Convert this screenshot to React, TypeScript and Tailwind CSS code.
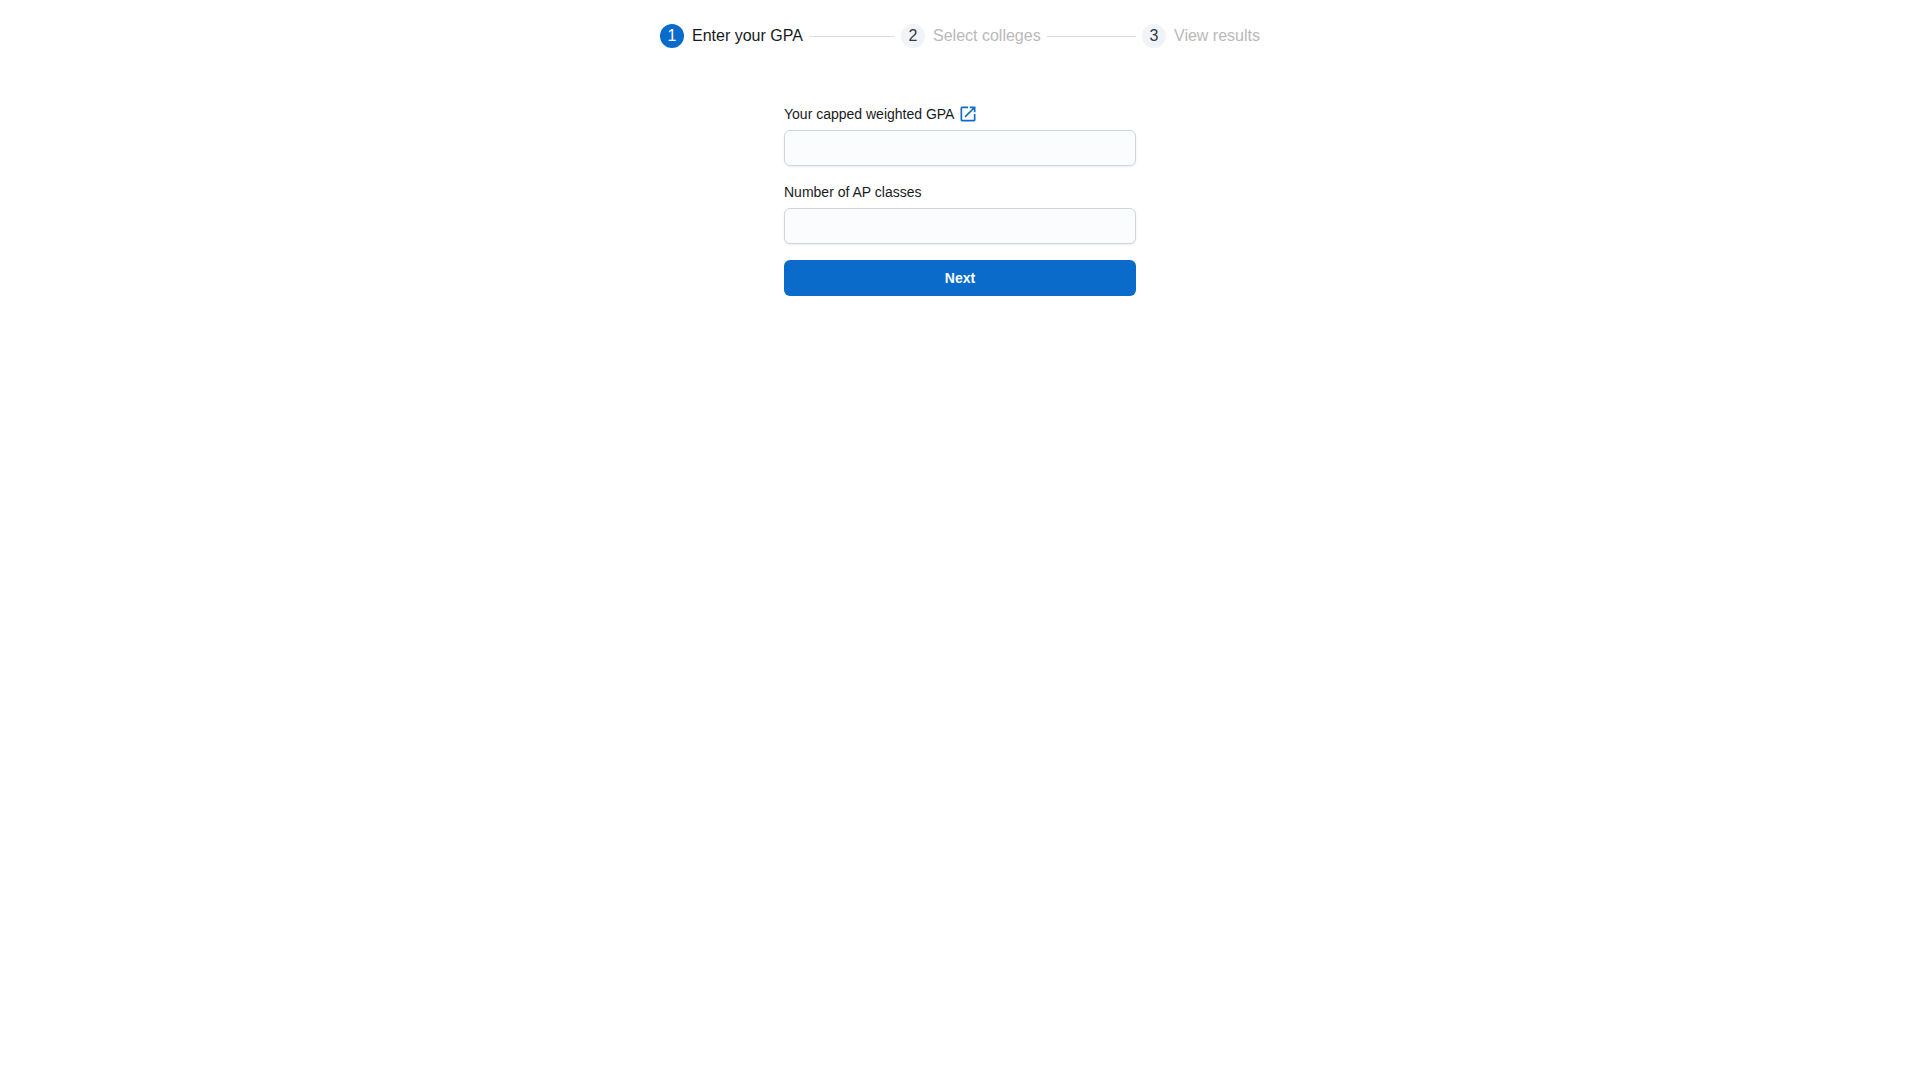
import { useState } from 'react'
import { MdOpenInNew } from 'react-icons/md'

const STEPS = ['Enter your GPA', 'Select colleges', 'View results']

const inputClass =
  'h-9 w-full rounded-md border border-[#cdd7e1] bg-[#fbfcfe] px-3 text-base text-[#171a1c] shadow-[0_1px_2px_0_rgba(21,21,21,0.08)] outline-none focus:border-[#0b6bcb]'

function Stepper({ current }: { current: number }) {
  return (
    <ol className="flex w-full max-w-[600px]">
      {STEPS.map((label, index) => {
        const active = index === current
        const last = index === STEPS.length - 1

        return (
          <li
            key={label}
            aria-current={active ? 'step' : undefined}
            className={`flex items-center ${last ? 'flex-none' : 'flex-1'}`}
          >
            <span
              className={`mr-2 flex size-6 shrink-0 items-center justify-center rounded-full ${
                active ? 'bg-[#0b6bcb] text-white' : 'bg-[#f0f4f8] text-[#32383e]'
              }`}
            >
              {index + 1}
            </span>
            <span className={`whitespace-nowrap ${active ? 'text-[#171a1c]' : 'text-[#b9b9b9]'}`}>
              {label}
            </span>
            {!last && <span className="mx-1.5 h-px flex-1 bg-[#dddddd]" />}
          </li>
        )
      })}
    </ol>
  )
}

function App() {
  const [step, setStep] = useState(0)
  const [gpa, setGpa] = useState('')
  const [apClasses, setApClasses] = useState('')

  const handleSubmit = (e: React.FormEvent) => {
    e.preventDefault()
    if (!gpa || !apClasses) return
    setStep(1)
  }

  return (
    <main className="flex min-h-screen flex-col items-center bg-white px-4 py-6 font-['Liberation_Sans',Arial,sans-serif] text-base text-[#171a1c]">
      <Stepper current={step} />

      <form onSubmit={handleSubmit} className="mt-14 flex w-full max-w-[352px] flex-col gap-4">
        <div className="flex flex-col gap-1.5">
          <div className="flex h-5 items-center gap-1 text-sm">
            <label htmlFor="gpa">Your capped weighted GPA</label>
            <a href="#gpa-calculator" aria-label="Open GPA calculator" className="text-[#0b6bcb]">
              <MdOpenInNew size={20} />
            </a>
          </div>
          <input
            id="gpa"
            type="text"
            inputMode="decimal"
            value={gpa}
            onChange={(e) => setGpa(e.target.value)}
            className={inputClass}
          />
        </div>

        <div className="flex flex-col gap-1.5">
          <label htmlFor="ap-classes" className="text-sm">
            Number of AP classes
          </label>
          <input
            id="ap-classes"
            type="text"
            inputMode="numeric"
            value={apClasses}
            onChange={(e) => setApClasses(e.target.value)}
            className={inputClass}
          />
        </div>

        <button
          type="submit"
          className="h-9 w-full rounded-md bg-[#0b6bcb] text-sm font-semibold text-white hover:bg-[#185ea5]"
        >
          Next
        </button>
      </form>
    </main>
  )
}

export default App
